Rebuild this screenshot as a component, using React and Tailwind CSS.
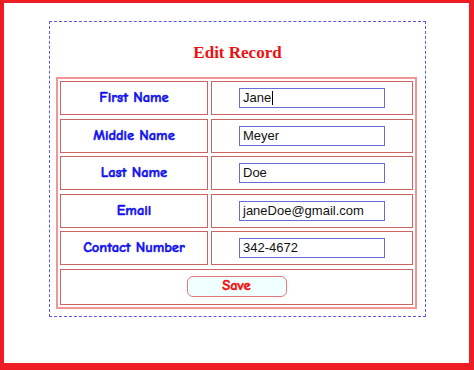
import React from "react";

const fields = [
  { label: "First Name", value: "Jane", focused: true },
  { label: "Middle Name", value: "Meyer" },
  { label: "Last Name", value: "Doe" },
  { label: "Email", value: "janeDoe@gmail.com" },
  { label: "Contact Number", value: "342-4672" },
];

const comic = { fontFamily: '"Comic Sans MS", "Comic Neue", "Noto Sans", sans-serif' };

const App = () => {
  return (
    <div className="w-[474px] h-[370px] bg-white border-l-4 border-t-[3px] border-r-[5px] border-b-[7px] border-[#ee1c25] pt-[18px] pl-[45px]">
      <div className="w-[377px] h-[296px] border border-dashed border-[#5a5ae6]">
        <h2 className="pt-[21px] mb-[14px] text-center text-[17px] leading-[20px] font-bold text-[#ee1111] font-['Liberation_Serif',serif]">
          Edit Record
        </h2>

        <div className="ml-[6px] w-[361px] border-2 border-[#f29595] p-[2px] grid grid-cols-[148px_1fr] gap-x-[3px] gap-y-[3.5px]">
          {fields.map((f) => (
            <React.Fragment key={f.label}>
              <div className="h-[34px] border border-[#cd6464] flex items-center justify-center">
                <span className="text-[14.5px] font-bold text-[#1111ee] [-webkit-text-stroke:0.5px_#1111ee]" style={comic}>
                  {f.label}
                </span>
              </div>
              <div className="h-[34px] border border-[#cd6464] flex items-center justify-center">
                <div className="w-[146px] h-[20px] border border-[#6b6bd6] flex items-center px-[3px] text-[13px] text-[#111] font-['Liberation_Sans',Arial,sans-serif]">
                  <span>{f.value}</span>
                  {f.focused && <span className="w-px h-[14px] bg-black ml-px" />}
                </div>
              </div>
            </React.Fragment>
          ))}
          <div className="col-span-2 h-[36px] border border-[#cd6464] flex items-center justify-center">
            <button
              className="w-[100px] h-[21px] rounded-[6px] border border-[#e27b7b] bg-[#f0ffff] text-[14.5px] leading-none font-bold text-[#ee1111] [-webkit-text-stroke:0.5px_#ee1111]"
              style={comic}
            >
              Save
            </button>
          </div>
        </div>
      </div>
    </div>
  );
};

export default App;
